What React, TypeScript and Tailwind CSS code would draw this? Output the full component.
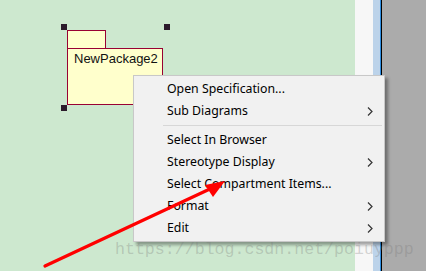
import React from "react";

const Chevron = () => (
  <svg width="6" height="9" viewBox="0 0 6 9" className="block">
    <path d="M1 0.5 L5 4.5 L1 8.5" fill="none" stroke="#333" strokeWidth="1.2" />
  </svg>
);

const Item = ({ label, sub }: { label: string; sub?: boolean }) => (
  <div className="h-[22px] flex items-center pl-[33px] pr-[11px] justify-between">
    <span>{label}</span>
    {sub ? <Chevron /> : null}
  </div>
);

export default function App() {
  return (
    <div className="relative w-[426px] h-[271px] overflow-hidden flex" style={{ fontFamily: "'Noto Sans', sans-serif" }}>
      <div className="w-[355px] h-full bg-[#cde8cf]" />
      <div className="w-[18px] h-full bg-[#f7f7f7]" />
      <div className="w-[7px] h-full bg-[#bcd3ea]" />
      <div className="w-[1px] h-full bg-[#2f8ee0]" />
      <div className="w-[1px] h-full bg-[#000]" />
      <div className="flex-1 h-full bg-[#ababab]" />

      {/* package */}
      <div className="absolute left-[67px] top-[30px] w-[39px] h-[19px] bg-[#ffffcc] border border-[#990033]" />
      <div
        className="absolute left-[67px] top-[48px] w-[96px] h-[57px] bg-[#ffffcc] border border-[#990033] pl-[6px] pt-[2px] text-[13px] leading-[16px] text-[#111]"
        style={{ fontFamily: "'Liberation Sans', Arial, sans-serif" }}
      >
        NewPackage2
      </div>
      <div className="absolute left-[61px] top-[24px] w-[6px] h-[6px] bg-[#2b1b2b]" />
      <div className="absolute left-[164px] top-[24px] w-[6px] h-[6px] bg-[#2b1b2b]" />
      <div className="absolute left-[61px] top-[105px] w-[6px] h-[6px] bg-[#2b1b2b]" />

      {/* context menu */}
      <div className="absolute left-[133px] top-[75px] w-[252px] bg-[#f1f1f1] border border-[#c8c8c8] pt-[2px] pb-[2px] text-[12.3px] text-[#000] shadow-[3px_3px_3px_rgba(0,0,0,0.35)]">
        <Item label="Open Specification..." />
        <Item label="Sub Diagrams" sub />
        <div className="h-[7px] flex items-center pl-[29px] pr-[2px]">
          <div className="h-[1px] w-full bg-[#d7d7d7]" />
        </div>
        <Item label="Select In Browser" />
        <Item label="Stereotype Display" sub />
        <Item label="Select Compartment Items..." />
        <Item label="Format" sub />
        <Item label="Edit" sub />
      </div>

      {/* watermark */}
      <div
        className="absolute left-[115px] top-[240px] text-[16.6px] leading-[20px] text-[rgba(120,120,120,0.3)] whitespace-nowrap"
        style={{ fontFamily: "'Liberation Mono', 'Courier New', monospace" }}
      >
        https://blog.csdn.net/poiuyppp
      </div>

      {/* red arrow */}
      <svg className="absolute left-0 top-0" width="426" height="271" viewBox="0 0 426 271">
        <line x1="45" y1="266" x2="212" y2="188" stroke="#ff0000" strokeWidth="3.2" strokeLinecap="round" />
        <polygon points="225,181 205,185 213,197" fill="#ff0000" />
      </svg>
    </div>
  );
}
